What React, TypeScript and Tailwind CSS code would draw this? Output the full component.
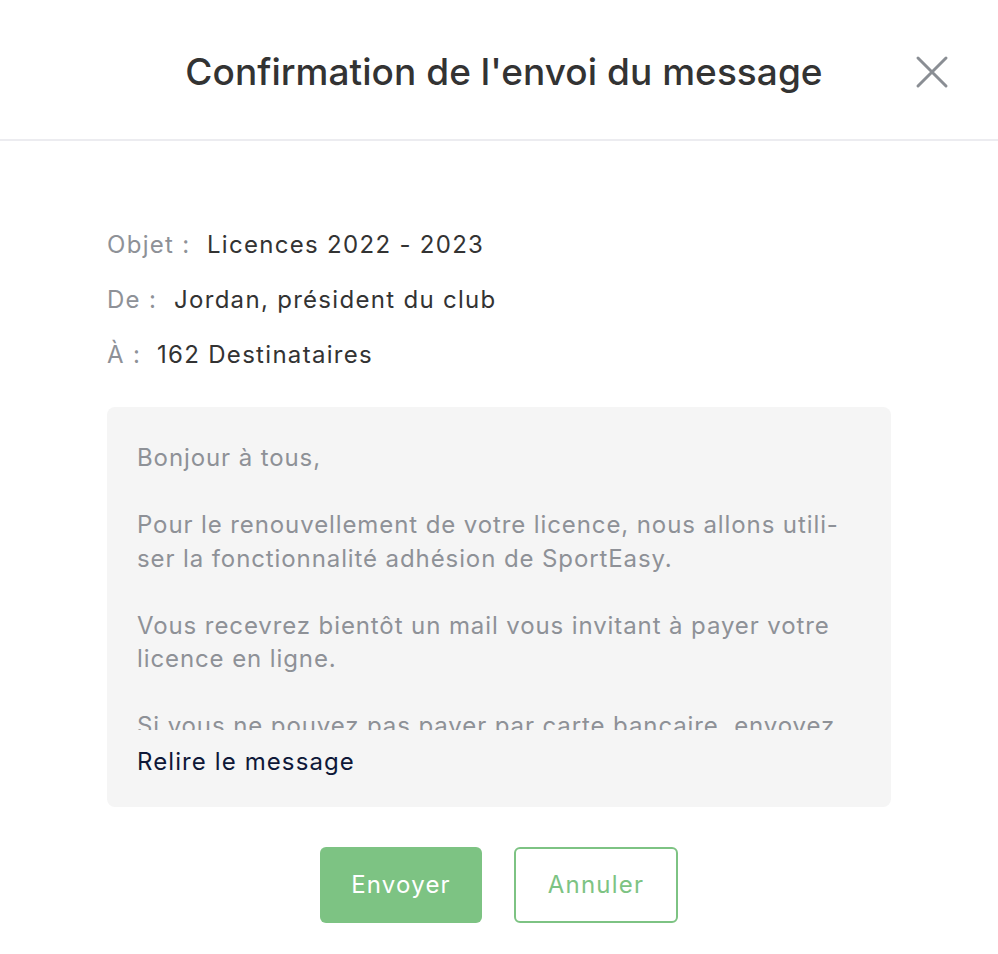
import React from "react";

export default function App() {
  return (
    <div className="w-[998px] h-[954px] bg-white flex flex-col" style={{ fontFamily: "Inter, 'Noto Sans', sans-serif" }}>
      <div className="relative h-[141px] border-b-2 border-[#ececf0] flex items-center justify-center shrink-0 pt-[5px] pl-[10px]">
        <h1 className="text-[37px] font-medium text-[#333333] tracking-[0.05px]">Confirmation de l'envoi du message</h1>
        <button className="absolute right-[49px] top-[55px] w-[34px] h-[34px] flex items-center justify-center">
          <svg width="34" height="34" viewBox="0 0 34 34" fill="none" stroke="#8a8e94" strokeWidth="3" strokeLinecap="round">
            <path d="M3 3L31 31M31 3L3 31" />
          </svg>
        </button>
      </div>
      <div className="w-[784px] mx-auto pt-[87px] flex flex-col tracking-[1.3px]">
        <div className="flex flex-col gap-[21px] text-[24px] leading-[34px]">
          <div className="flex"><span className="text-[#8e9197] w-[100px] whitespace-nowrap">Objet :</span><span className="text-[#333333]">Licences 2022 - 2023</span></div>
          <div className="flex"><span className="text-[#8e9197] w-[67px] whitespace-nowrap">De :</span><span className="text-[#333333]">Jordan, président du club</span></div>
          <div className="flex"><span className="text-[#8e9197] w-[50px] whitespace-nowrap">À :</span><span className="text-[#333333]">162 Destinataires</span></div>
        </div>
        <div className="mt-[35px] bg-[#f5f5f5] rounded-[8px] pl-[30px] pr-[30px] pt-[34px] pb-[28px] flex flex-col">
          <div className="h-[289px] overflow-hidden text-[24px] leading-[33.5px] text-[#8e9197] tracking-[0.9px] whitespace-nowrap">
            <p>Bonjour à tous,</p>
            <p className="mt-[33.5px]">Pour le renouvellement de votre licence, nous allons utili-<br />ser la fonctionnalité adhésion de SportEasy.</p>
            <p className="mt-[33.5px]">Vous recevrez bientôt un mail vous invitant à payer votre<br />licence en ligne.</p>
            <p className="mt-[33.5px]">Si vous ne pouvez pas payer par carte bancaire, envoyez<br />un chèque à l'ordre du club.</p>
          </div>
          <button className="mt-[15px] text-left text-[24px] leading-[34px] text-[#0e1838] tracking-[1.1px]">Relire le message</button>
        </div>
        <div className="flex justify-center gap-[32px] mt-[40px]">
          <button className="w-[162px] h-[76px] rounded-[6px] bg-[#7dc383] text-white text-[24px] tracking-[1.2px]">Envoyer</button>
          <button className="w-[164px] h-[76px] rounded-[6px] border-2 border-[#7dc383] text-[#7dc383] text-[24px] tracking-[1.2px]">Annuler</button>
        </div>
      </div>
    </div>
  );
}
